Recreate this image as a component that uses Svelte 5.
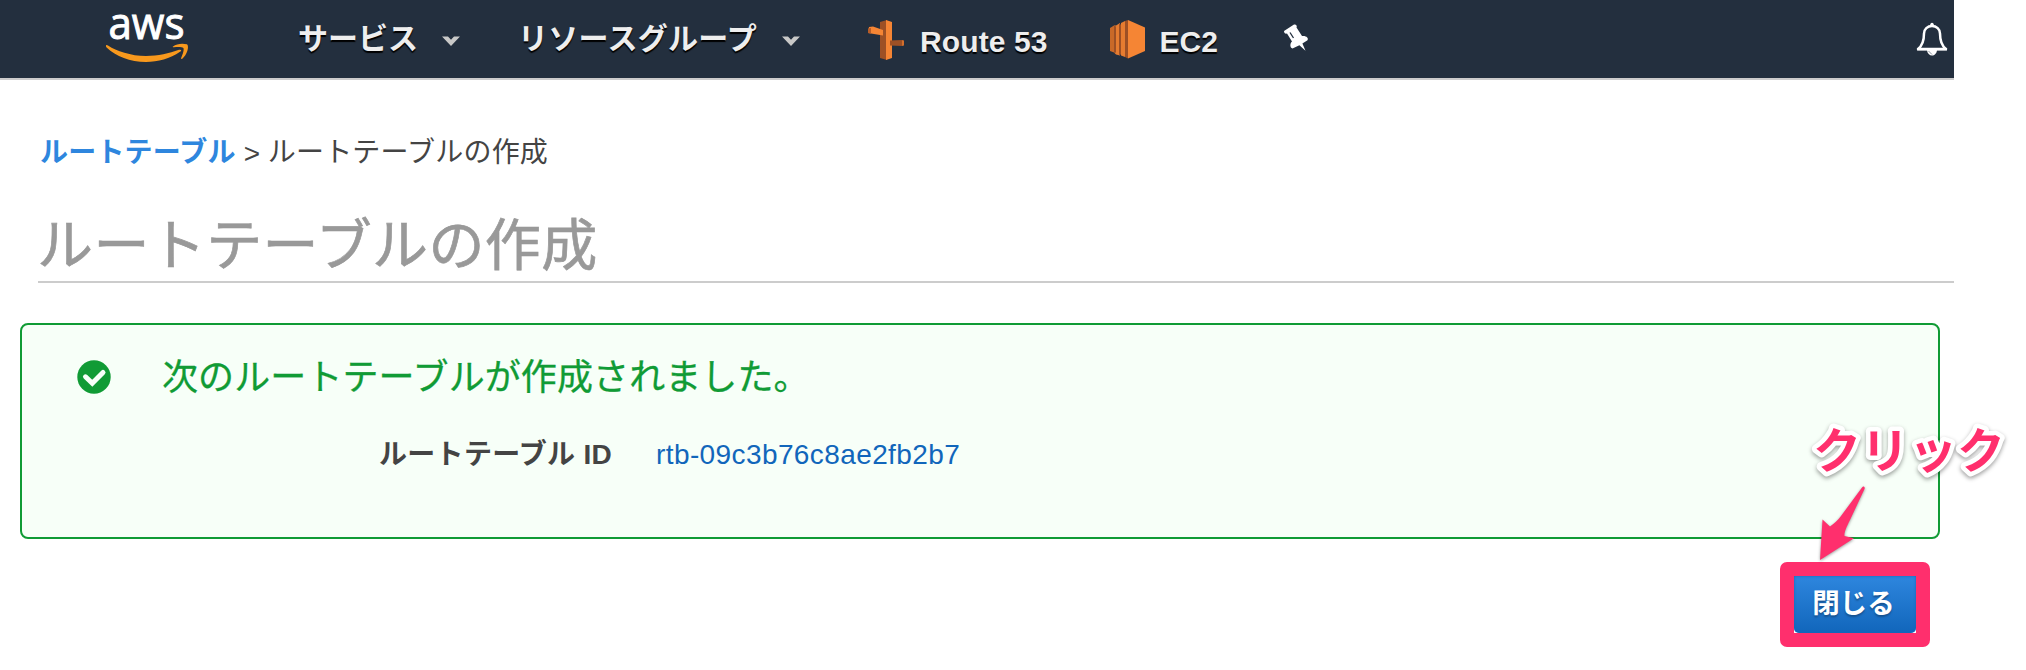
<script>
  const tableId = 'rtb-09c3b76c8ae2fb2b7';
  const menus = ['サービス', 'リソースグループ'];
</script>

<div class="page">
  <header class="nav">
    <svg class="logo" width="84" height="66" viewBox="106 0 84 66" role="img" aria-label="aws">
      <text x="108.5" y="38.5" textLength="76" lengthAdjust="spacingAndGlyphs">aws</text>
      <g fill="#f8991d">
        <path d="M106 45.5C106.3 44.6 107.3 45 108.4 45.7C116 50.7 131 56 146 56C158 56 169 53.5 179 49.8C181.5 49.2 182 50.6 180 51.8C170 58.8 158 62 146 62C130 62 116 56.2 106.6 47.4C106 46.8 105.8 46 106 45.5Z" />
        <path d="M173 46.5C176.5 43.8 182 43.2 187 44.3C189.5 46.5 187 55 182.3 58.7C181.3 59.3 180.8 58.8 181.2 57.8C182.7 54.4 184.3 50 183.4 48.1C181.8 46.6 177.5 46.9 173.8 47.3C172.8 47.3 172.3 47 173 46.5Z" />
      </g>
    </svg>
    {#each menus as menu}
      <div class="menu">
        <span>{menu}</span>
        <svg width="18" height="10" viewBox="0 0 18 10"><path d="M0 .5H6L9 3.8L12 .5H18L9 10Z" fill="#c9c9c8" /></svg>
      </div>
    {/each}
    <div class="shortcut route">
      <svg width="37" height="42" viewBox="0 0 37 42">
        <path d="M12 2L19 0V40L12 38Z" fill="#9d5025" />
        <path d="M18 0L24 2V38L18 40Z" fill="#f58534" />
        <path d="M1 7L5 6.5L15 10V15.5L0 13Z" fill="#f58534" />
        <path d="M0 8.5L3 8V13.5L0 13Z" fill="#b75d28" />
        <path d="M22 20.5L34 20V26L22 25.5Z" fill="#9d5025" />
        <path d="M34 20L36 20.5V25.5L34 26Z" fill="#d36f2c" />
      </svg>
      <span>Route 53</span>
    </div>
    <div class="shortcut ec2">
      <svg width="35" height="39" viewBox="0 0 35 39">
        <path d="M0 8L4 5.5V32.5L0 31Z" fill="#c96928" />
        <path d="M4 5.5H6L10 3V35.5L6 34.5L4 32.5Z" fill="#e67c30" />
        <path d="M4 5.5L6 6.5V32.5L4 33ZM9 4L11 4.5V34.5L9 35ZM15 1L18 0V38.5L15 37Z" fill="#9d5025" />
        <path d="M11 3L15 1V37L11 35.5Z" fill="#e67c30" />
        <path d="M18 0L35 7.5V31L18 38.5Z" fill="#f58534" />
      </svg>
      <span>EC2</span>
    </div>
    <svg class="pin" width="25" height="28" viewBox="0 0 25 28">
      <path d="M0 7L10 .5C12 0 13.5 1.7 12.5 3.4L18 12C22.5 11.5 24.8 14 23.5 16.2L18.4 19.4L21.5 26.8L15.4 21.3L8.5 24.6C5.8 24 5.7 19.5 8 17.6L3 9.6C1 10 0 8.8 0 7Z" fill="#fff" />
      <path d="M6 8.5L9.5 14" stroke="#232f3e" stroke-width="1.3" />
    </svg>
    <svg class="bell" width="32" height="36" viewBox="0 0 32 36">
      <path d="M2 27C6 24 8 19 8 11.5C8 7 11.5 4 16 4C20.5 4 24 7 24 11.5C24 19 26 24 30 27Z" fill="none" stroke="#fff" stroke-width="2.5" stroke-linejoin="round" />
      <path d="M14 4C14 -.3 18 -.3 18 4ZM1 26.2H31V28.6H1Z" fill="#fff" />
      <path d="M11 28H21C20.5 35.3 11.5 35.3 11 28Z" fill="#fff" />
      <path d="M12.5 29L16 32.5" stroke="#697481" stroke-width=".8" />
    </svg>
  </header>

  <main>
    <nav class="crumbs"><a href="#tables">ルートテーブル</a><span class="gt">&gt;</span><span>ルートテーブルの作成</span></nav>
    <h1>ルートテーブルの作成</h1>
    <section class="notice">
      <svg class="check" width="34" height="34" viewBox="0 0 34 34">
        <circle cx="17" cy="17" r="16.7" fill="#109b35" />
        <path d="M8.5 16.8L15.3 23.3L26 12.5" fill="none" stroke="#f7fff8" stroke-width="5" stroke-linejoin="miter" stroke-linecap="round" />
      </svg>
      <div class="body">
        <p>次のルートテーブルが作成されました。</p>
        <dl>
          <dt>ルートテーブル ID</dt>
          <dd><a href="#id">{tableId}</a></dd>
        </dl>
      </div>
    </section>
    <div class="actions">
      <div class="close-wrap">
        <button>閉じる</button>
        <div class="highlight"></div>
      </div>
    </div>
  </main>

  <svg class="callout" width="226" height="170" viewBox="1800 410 226 170">
    <text x="1813" y="467.5">クリック</text>
    <path d="M1862.2 487.2C1863.3 485.5 1865.5 487 1864.5 489L1850 520C1846 528 1844 533 1844.5 536L1854 538.2L1820 560L1822.5 519.5L1830 526.5C1834 524 1838 520 1841 516Z" />
  </svg>
</div>

<style>
  :global(body) { margin: 0; background: #fff; }
  .page {
    position: relative;
    width: 2026px;
    height: 670px;
    overflow: hidden;
    background: #fff;
    color: #444;
    font-family: "Liberation Sans", "Noto Sans CJK JP", sans-serif;
    font-size: 28px;
  }
  svg { display: block; flex: none; }
  a { text-decoration: none; }
  .nav {
    display: flex;
    box-sizing: border-box;
    width: 1954px;
    height: 80px;
    padding: 0 6px 0 106px;
    background: #232f3e;
    border-bottom: 2px solid #ccc;
    color: #eee;
    font-size: 30px;
    font-weight: 700;
    line-height: 78px;
    text-shadow: 0 2px 1px #000;
    white-space: nowrap;
  }
  .logo { overflow: visible; }
  .logo text { font: 400 44px "Open Sans", sans-serif; fill: #fff; stroke: #fff; stroke-width: 1px; text-shadow: none; }
  .menu { display: flex; margin-left: 108px; }
  .menu span { line-height: 78px; }
  .menu svg { margin: 36px 0 0 24px; }
  .menu + .menu { margin-left: 58px; }
  .menu + .menu span { letter-spacing: .3px; }
  .menu + .menu svg { margin-left: 25px; }
  .shortcut { display: flex; line-height: 83px; }
  .route { margin-left: 68px; }
  .route svg { margin: 20px 15px 0 0; }
  .route span { letter-spacing: .1px; }
  .ec2 { margin-left: 62px; }
  .ec2 svg { margin: 20px 15px 0 0; }
  .pin { margin: 24px 0 0 66px; }
  .bell { margin: 22px 0 0 auto; }
  main { width: 1954px; }
  .crumbs {
    display: flex;
    padding: 52px 0 0 40px;
    line-height: 42px;
    letter-spacing: .2px;
  }
  .crumbs a { color: #2e86de; font-weight: 700; }
  .gt { width: 17px; margin: 1px 7px 0 8px; }
  h1 {
    box-sizing: border-box;
    height: 108px;
    margin: 0 0 0 38px;
    padding: 30px 0 0;
    border-bottom: 2px solid #ccc;
    color: #999;
    font-size: 56px;
    font-weight: 400;
    line-height: 82px;
    letter-spacing: .4px;
    text-indent: -1px;
    -webkit-text-stroke: .7px #999;
  }
  .notice {
    display: flex;
    box-sizing: border-box;
    width: 1920px;
    height: 216px;
    margin: 40px 0 0 20px;
    padding: 35px 0 0 55px;
    border: 2px solid #109b35;
    border-radius: 8px;
    background: #f7fff8;
  }
  .body { margin-left: 51px; }
  p { margin: -8px 0 0; color: #109b35; font-size: 36px; line-height: 52px; letter-spacing: .1px; -webkit-text-stroke: .3px #109b35; }
  dl { display: flex; margin: 31px 0 0 217px; line-height: 40px; }
  dt { width: 277px; font-weight: 700; letter-spacing: .3px; }
  dd { margin: 0; letter-spacing: .4px; }
  dd a { color: #1166bb; }
  .actions { display: flex; justify-content: flex-end; padding: 37px 38px 0 0; }
  .close-wrap { position: relative; }
  button {
    display: block;
    width: 122px;
    height: 57px;
    padding: 0 3px 8px 0;
    border: 0;
    border-radius: 0 0 5px 5px;
    background: linear-gradient(#2e86de, #1166bb);
    box-shadow: inset 0 0 3px #1166bb;
    color: #fff;
    font: 700 27.5px "Noto Sans CJK JP", sans-serif;
    text-shadow: 0 2px 2px #15518f;
  }
  .highlight {
    position: absolute;
    inset: -14px;
    border: 14px solid #ff2f6d;
    border-radius: 7px;
    pointer-events: none;
  }
  .callout { position: absolute; left: 1800px; top: 410px; }
  .callout text {
    fill: #ff2f6d;
    stroke: #fff;
    stroke-width: 9px;
    stroke-linejoin: round;
    paint-order: stroke;
    font: 700 48px "Noto Sans CJK JP", sans-serif;
    filter: drop-shadow(0 2px 2px rgba(0, 0, 0, .38));
  }
  .callout path { fill: #ff2f6d; filter: drop-shadow(0 1px 1.5px rgba(0, 0, 0, .4)); }
</style>
